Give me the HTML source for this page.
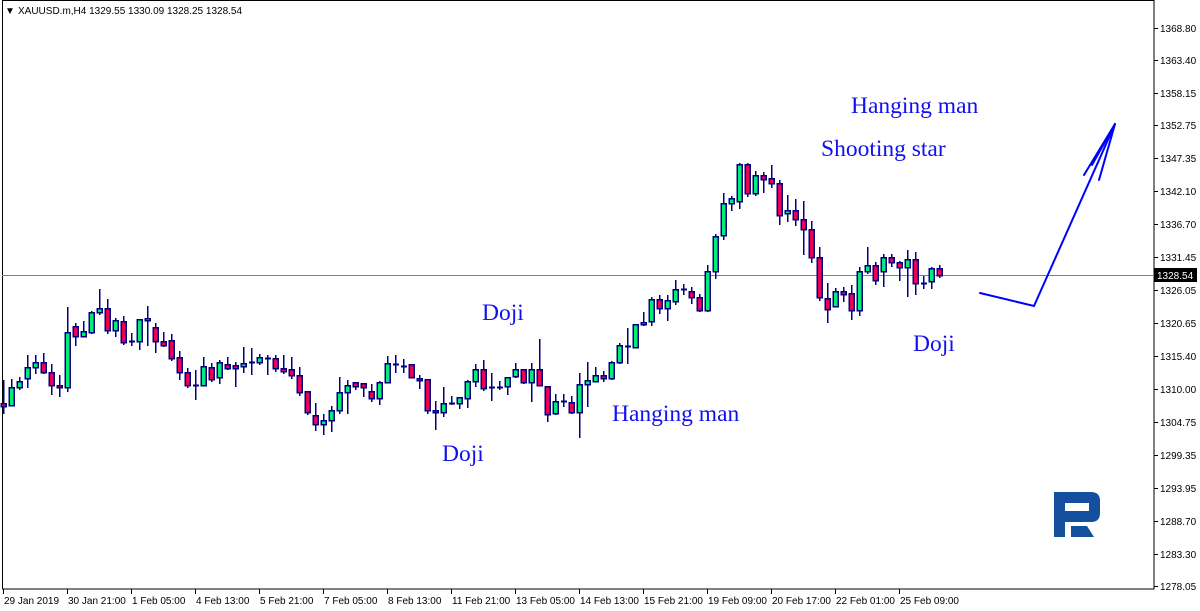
<!DOCTYPE html>
<html><head><meta charset="utf-8"><style>
html,body{margin:0;padding:0;background:#fff;width:1200px;height:611px;overflow:hidden}
svg{display:block}
.ax{font-family:"Liberation Sans",sans-serif;font-size:10px;fill:#000}
.lb{font-family:"Liberation Serif",serif;font-size:23.5px;fill:#1010f0}
</style></head><body>
<svg id="s" width="1200" height="611" xmlns="http://www.w3.org/2000/svg" shape-rendering="crispEdges">
<rect x="2.5" y="0.5" width="1151.5" height="588.5" fill="none" stroke="#000" stroke-width="1"/>
<line x1="2" y1="275.5" x2="1154" y2="275.5" stroke="#808080"/>
<text x="5" y="14" class="ax" style="font-size:10px">▼</text>
<text x="18" y="14" class="ax">XAUUSD.m,H4  1329.55 1330.09 1328.25 1328.54</text>
<g id="c"></g>
<g id="ax"></g>
<rect x="1154" y="268" width="43" height="14" fill="#000"/>
<text x="1157" y="279" class="ax" fill="#fff" style="fill:#fff">1328.54</text>
<text x="851" y="113" class="lb">Hanging man</text>
<text x="821" y="156" class="lb">Shooting star</text>
<text x="482" y="320" class="lb">Doji</text>
<text x="913" y="351" class="lb">Doji</text>
<text x="612" y="421" class="lb">Hanging man</text>
<text x="442" y="461" class="lb">Doji</text>
<g stroke="#0000ff" stroke-width="2" fill="none" shape-rendering="auto" stroke-linecap="round">
<polyline points="980,293 1034,306 1115,124"/>
<line x1="1115" y1="124" x2="1084" y2="175"/>
<line x1="1115" y1="124" x2="1099" y2="180"/>
<line x1="1115" y1="124" x2="1092" y2="165"/>
</g>
<path shape-rendering="auto" fill="#14509e" d="M1054,492 H1091 Q1100,492 1100,501 V513 Q1100,522 1091,522 H1065 V537 H1054 Z M1065,503 V511 H1089 V503 Z"/>
<path shape-rendering="auto" fill="#14509e" d="M1071,526 H1087 L1094,537 H1071 Z"/>
</svg>
<script>
var D=[
['r',403,406,380,413],['g',387,405,379,405],['g',381,387,377,389],['g',367,378,355,387],['g',362,367,355,373],['r',362,372,353,373],['r',372,385,364,394],['r',385,387,375,396],['g',332,387,307,391],['r',326,336,323,345],
['g',331,336,321,336],['g',312,332,311,333],['g',308,312,289,314],['r',308,330,299,333],['g',320,330,318,336],['r',321,342,316,344],['d',341,341,333,345],['g',319,341,319,349],['g',318,320,306,345],['r',327,341,323,352],
['r',341,345,332,346],['r',340,358,334,360],['r',357,372,351,379],['r',372,385,368,387],['d',385,385,370,399],['g',366,385,357,385],['r',367,379,363,381],['g',362,377,360,383],['r',364,368,357,369],['r',365,368,362,386],
['g',363,366,347,372],['d',362,362,348,374],['g',357,362,354,364],['d',358,358,355,374],['r',358,368,355,371],['r',368,371,355,373],['r',369,375,357,378],['r',375,392,367,395],['r',391,412,391,414],['r',415,424,403,430],
['g',420,424,414,434],['g',410,420,406,431],['g',392,410,377,413],['g',385,392,380,413],['r',382,386,382,389],['r',383,387,383,396],['r',391,398,384,401],['g',382,398,381,404],['g',363,382,356,382],['d',364,364,355,372],
['d',366,366,359,372],['r',364,377,364,377],['r',378,380,375,388],['r',379,410,379,413],['r',410,412,401,429],['g',403,412,387,416],['d',403,403,396,404],['g',397,403,397,408],['g',381,398,380,407],['g',369,381,364,386],
['r',369,388,360,390],['d',387,387,373,400],['d',387,387,381,389],['g',377,386,377,394],['g',369,376,363,377],['r',369,382,369,383],['g',369,382,363,401],['r',369,385,339,385],['r',386,414,386,421],['g',401,413,394,414],
['d',401,401,394,406],['r',402,412,396,413],['g',384,412,373,437],['g',380,384,362,406],['g',375,381,367,381],['r',375,378,371,381],['g',362,378,361,379],['g',345,362,343,363],['d',346,346,328,363],['g',324,347,324,347],
['g',322,324,312,325],['g',299,321,297,325],['r',299,308,295,313],['g',300,308,295,320],['g',289,301,280,304],['d',289,289,284,294],['r',291,297,287,303],['r',297,310,294,311],['g',271,310,265,311],['g',236,271,234,278],
['g',203,235,193,239],['g',198,203,196,210],['g',164,201,163,208],['r',164,193,163,196],['g',175,193,171,195],['r',175,179,172,192],['r',178,183,165,187],['r',183,215,180,224],['g',210,213,195,221],['r',210,219,199,225],
['r',219,229,201,254],['r',229,257,221,262],['r',257,297,247,300],['r',298,309,283,322],['g',291,306,288,306],['r',291,294,287,301],['r',293,310,285,319],['g',271,310,267,315],['g',265,271,247,273],['r',265,280,262,284],
['g',257,271,254,286],['r',257,262,254,266],['r',262,267,261,280],['g',259,267,250,296],['r',259,283,252,294],['d',283,283,276,288],['g',268,281,267,288],['r',268,275,265,277]];
var h='';
D.forEach(function(d,i){var x=3+8*i;
h+='<line x1="'+(x+.5)+'" y1="'+d[3]+'" x2="'+(x+.5)+'" y2="'+(d[4]+1)+'" stroke="#000080" stroke-width="1.5"/>';
if(d[0]=='d'){h+='<line x1="'+(x-2)+'" y1="'+(d[1]+.5)+'" x2="'+(x+4)+'" y2="'+(d[1]+.5)+'" stroke="#000080" stroke-width="2"/>';}
else{h+='<rect x="'+(x-2)+'" y="'+(d[1]+.5)+'" width="5" height="'+Math.max(1,d[2]-d[1])+'" fill="'+(d[0]=='g'?'#00ee77':'#ee0055')+'" stroke="#000080" stroke-width="1.5"/>';}
});
document.getElementById('c').innerHTML=h;
var P=[['1368.80',28],['1363.40',60],['1358.15',93],['1352.75',125],['1347.35',158],['1342.10',191],['1336.70',224],['1331.45',257],['1326.05',290],['1320.65',323],['1315.40',356],['1310.00',389],['1304.75',422],['1299.35',455],['1293.95',488],['1288.70',521],['1283.30',554],['1278.05',586]];
var a='';
P.forEach(function(p){a+='<line x1="1154" y1="'+(p[1]+.5)+'" x2="1158" y2="'+(p[1]+.5)+'" stroke="#000"/><text x="1160" y="'+(p[1]+4)+'" class="ax">'+p[0]+'</text>';});
var T=['29 Jan 2019','30 Jan 21:00','1 Feb 05:00','4 Feb 13:00','5 Feb 21:00','7 Feb 05:00','8 Feb 13:00','11 Feb 21:00','13 Feb 05:00','14 Feb 13:00','15 Feb 21:00','19 Feb 09:00','20 Feb 17:00','22 Feb 01:00','25 Feb 09:00'];
T.forEach(function(t,i){var x=3+64*i;a+='<line x1="'+(x+.5)+'" y1="589" x2="'+(x+.5)+'" y2="594" stroke="#000"/><text x="'+(x+1)+'" y="604" class="ax">'+t+'</text>';});
document.getElementById('ax').innerHTML=a;
</script>
</body></html>
